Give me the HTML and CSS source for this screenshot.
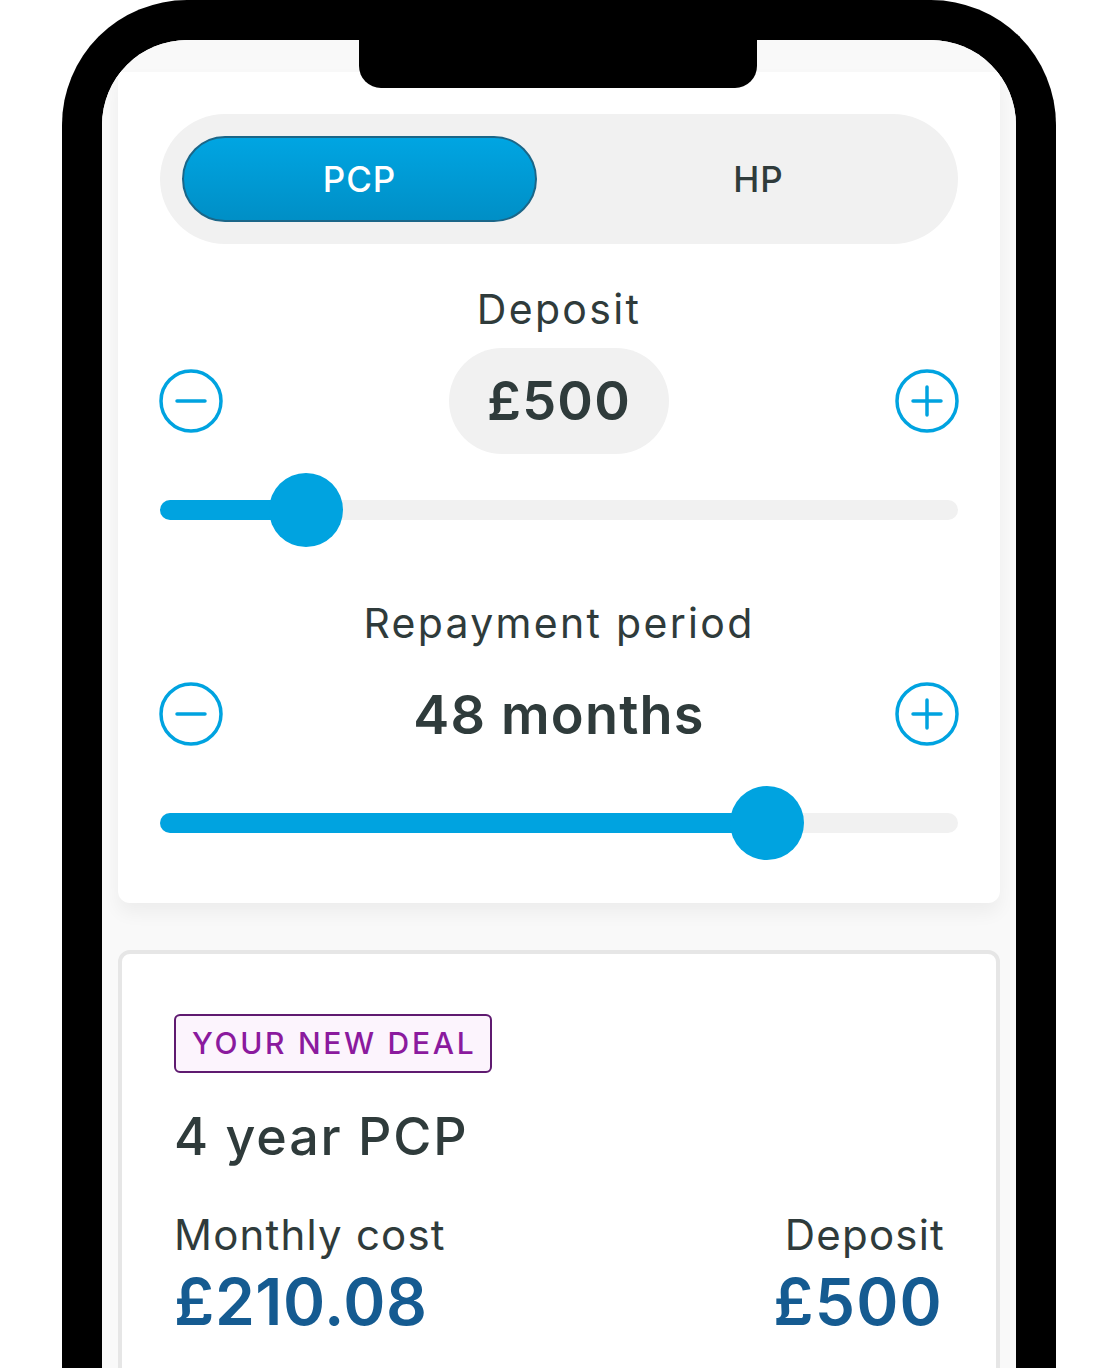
FILE: index.html
```html
<!DOCTYPE html>
<html lang="en-GB">
<head>
    <meta charset="UTF-8">
    <meta name="viewport" content="width=device-width, initial-scale=1.0">
    <title>Finance calculator</title>
    <link rel="stylesheet" href="styles.css">
</head>
<body>
    <div class="phone">
        <div class="notch"></div>
        <div class="screen">

            <!-- Calculator -->
            <div class="calc-card">
                <div class="toggle">
                    <button class="toggle-btn active">PCP</button>
                    <button class="toggle-btn">HP</button>
                </div>

                <div class="field-label">Deposit</div>
                <div class="stepper">
                    <button class="round-btn" aria-label="Less">
                        <svg viewBox="0 0 66 66" width="66" height="66"><circle cx="33" cy="33" r="30" /><line x1="19" y1="33" x2="47" y2="33" /></svg>
                    </button>
                    <div class="value value-pill">£500</div>
                    <button class="round-btn" aria-label="More">
                        <svg viewBox="0 0 66 66" width="66" height="66"><circle cx="33" cy="33" r="30" /><line x1="19" y1="33" x2="47" y2="33" /><line x1="33" y1="19" x2="33" y2="47" /></svg>
                    </button>
                </div>
                <div class="slider">
                    <div class="track"><div class="fill" style="width: 146px"></div></div>
                    <div class="thumb" style="left: 109px"></div>
                </div>

                <div class="field-label second">Repayment period</div>
                <div class="stepper">
                    <button class="round-btn" aria-label="Less">
                        <svg viewBox="0 0 66 66" width="66" height="66"><circle cx="33" cy="33" r="30" /><line x1="19" y1="33" x2="47" y2="33" /></svg>
                    </button>
                    <div class="value">48 months</div>
                    <button class="round-btn" aria-label="More">
                        <svg viewBox="0 0 66 66" width="66" height="66"><circle cx="33" cy="33" r="30" /><line x1="19" y1="33" x2="47" y2="33" /><line x1="33" y1="19" x2="33" y2="47" /></svg>
                    </button>
                </div>
                <div class="slider">
                    <div class="track"><div class="fill" style="width: 607px"></div></div>
                    <div class="thumb" style="left: 570px"></div>
                </div>
            </div>

            <!-- Deal summary -->
            <div class="deal-card">
                <span class="badge">YOUR NEW DEAL</span>
                <h2 class="deal-title">4 year PCP</h2>
                <div class="deal-row">
                    <div class="deal-col">
                        <div class="deal-label">Monthly cost</div>
                        <div class="deal-amount">£210.08</div>
                    </div>
                    <div class="deal-col right">
                        <div class="deal-label">Deposit</div>
                        <div class="deal-amount">£500</div>
                    </div>
                </div>
            </div>

        </div>
    </div>
</body>
</html>
```

FILE: styles.css
```css
body {
    margin: 0;
    background-color: white;
    font-family: Inter, "Liberation Sans", sans-serif;
    color: #2f3b3b;
    overflow: hidden;
}
.phone {
    position: relative;
    margin-left: 62px;
    width: 914px;
    height: 1400px;
    border: 40px solid black;
    border-bottom: none;
    border-radius: 125px 125px 0 0;
}
.notch {
    position: absolute;
    top: 0;
    left: 257px;
    width: 398px;
    height: 48px;
    background-color: black;
    border-radius: 0 0 22px 22px;
    z-index: 2;
}
.screen {
    height: 100%;
    background-color: #f9f9f9;
    border-radius: 85px 85px 0 0;
    overflow: hidden;
    padding: 32px 16px 0;
    box-sizing: border-box;
}
.calc-card {
    background-color: white;
    border-radius: 0 0 12px 12px;
    box-shadow: 0 10px 18px rgba(0,0,0,0.05);
    padding: 42px 42px 43px;
}
.toggle {
    display: grid;
    grid-template-columns: 1fr 1fr;
    gap: 44px;
    padding: 22px;
    background-color: #f1f1f1;
    border-radius: 65px;
}
.toggle-btn {
    height: 86px;
    border: none;
    border-radius: 43px;
    background: transparent;
    font-family: inherit;
    font-size: 35px;
    font-weight: 500;
    letter-spacing: 1px;
    color: #2f3b3b;
}
.toggle-btn.active {
    background: linear-gradient(#00a5e2, #008fc6);
    border: 2px solid #1b6688;
    color: white;
}
.field-label {
    margin-top: 40px;
    height: 50px;
    line-height: 50px;
    text-align: center;
    font-size: 41px;
    font-weight: 400;
    letter-spacing: 2.3px;
}
.field-label.second {
    margin-top: 51px;
}
.stepper {
    display: flex;
    justify-content: space-between;
    align-items: center;
    height: 106px;
    margin-top: 14px;
}
.field-label.second + .stepper {
    margin-top: 13px;
}
.round-btn {
    width: 66px;
    height: 66px;
    padding: 0;
    border: none;
    background: none;
    margin: 0 -2px;
}
.round-btn svg {
    display: block;
    fill: none;
    stroke: #00a3e0;
    stroke-width: 3.5;
    stroke-linecap: round;
}
.value {
    font-size: 54px;
    font-weight: 600;
    color: #2f3b3b;
    letter-spacing: 1.2px;
}
.value-pill {
    height: 106px;
    line-height: 106px;
    padding: 0 38px;
    background-color: #f1f1f1;
    border-radius: 53px;
}
.slider {
    position: relative;
    height: 74px;
    margin-top: 19px;
}
.track {
    position: absolute;
    left: 0;
    right: 0;
    top: 27px;
    height: 20px;
    border-radius: 10px;
    background-color: #f1f1f1;
    overflow: hidden;
}
.fill {
    height: 100%;
    background-color: #00a3e0;
}
.thumb {
    position: absolute;
    top: 0;
    width: 74px;
    height: 74px;
    border-radius: 50%;
    background-color: #00a3e0;
}
.deal-card {
    margin-top: 47px;
    background-color: white;
    border: 4px solid #e6e6e6;
    border-radius: 12px;
    padding: 60px 51px 40px 52px;
}
.badge {
    display: inline-block;
    height: 55px;
    line-height: 55px;
    padding: 0 14px 0 16px;
    border: 2px solid #5f1a70;
    border-radius: 6px;
    background-color: #fcf4fd;
    color: #8b1a9e;
    font-size: 30px;
    font-weight: 500;
    letter-spacing: 2.7px;
}
.deal-title {
    margin: 28px 0 0;
    font-size: 52px;
    font-weight: 500;
    line-height: 72px;
    letter-spacing: 1.8px;
}
.deal-row {
    display: flex;
    justify-content: space-between;
    margin-top: 36px;
}
.deal-col.right {
    text-align: right;
}
.deal-label {
    font-size: 42px;
    line-height: 52px;
    letter-spacing: 1.2px;
}
.deal-amount {
    margin-top: 3px;
    font-size: 64px;
    line-height: 76px;
    font-weight: 600;
    color: #155b91;
    letter-spacing: 0.6px;
}
.deal-col.right .deal-amount {
    margin-right: 2px;
    letter-spacing: 1.2px;
}
```
